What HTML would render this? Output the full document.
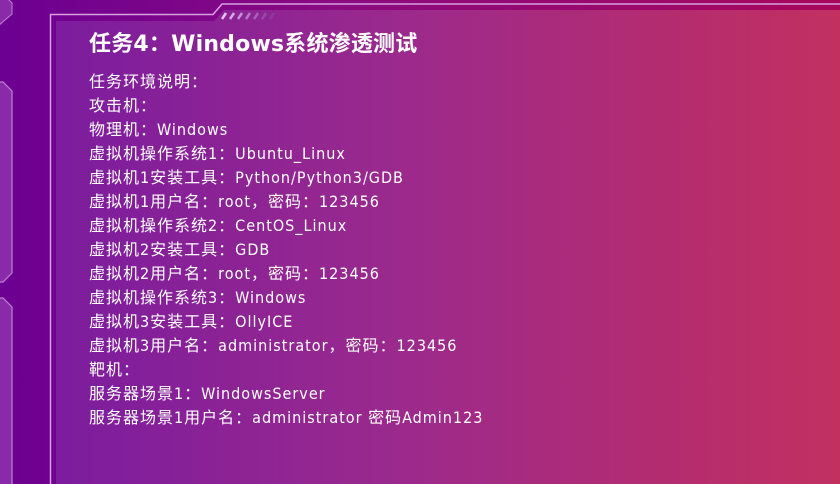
<!DOCTYPE html>
<html><head><meta charset="utf-8"><style>
html,body{margin:0;padding:0}
body{width:840px;height:484px;overflow:hidden;position:relative;background:linear-gradient(90deg,#6c0092 0%,#8a0a80 40%,#a8085a 100%);font-family:"DejaVu Sans","Noto Sans CJK SC",sans-serif;}
.txt{position:absolute;left:89px;top:70px;color:#fff;font-size:16px;line-height:24px;letter-spacing:1px;font-stretch:condensed;font-family:"DejaVu Sans Condensed","DejaVu Sans","Noto Sans CJK SC",sans-serif;}
.title{position:absolute;left:89px;top:29px;color:#fff;font-size:22px;line-height:32px;font-weight:bold;letter-spacing:0.2px}
</style></head><body>
<svg width="840" height="484" style="position:absolute;left:0;top:0">
<defs><linearGradient id="g" x1="0" x2="1" y1="0" y2="0">
<stop offset="0" stop-color="#7c1c9e"/><stop offset="0.45" stop-color="#9c2a8c"/><stop offset="0.75" stop-color="#b22c72"/><stop offset="1" stop-color="#c23060"/></linearGradient></defs>
<path d="M56 484 L56 21 L214 21 L224 10 L840 10 L840 484 Z" fill="url(#g)"/>
<path d="M50.5 484 L50.5 14.5 L213 14.5 L222 4 L840 4" fill="none" stroke="#d8a0e0" stroke-width="1.5"/>
<g stroke-width="2.5" stroke-linecap="butt">
<line x1="222" y1="19" x2="226" y2="13" stroke="#e8c0f0"/>
<line x1="230" y1="19" x2="234" y2="13" stroke="#d8a8e8"/>
<line x1="238" y1="19" x2="242" y2="13" stroke="#c890d8"/>
<line x1="246" y1="19" x2="250" y2="13" stroke="#b878c8"/>
<line x1="254" y1="19" x2="258" y2="13" stroke="#a860b8"/>
<line x1="262" y1="19" x2="266" y2="13" stroke="#9848a8"/>
<line x1="270" y1="19" x2="274" y2="13" stroke="#8c3aa0"/>
</g>
<path d="M-2 -5 L4 -5 L12 3 L12 14 L-2 26" fill="#8a2aa8" stroke="#c080d0" stroke-width="1"/>
<path d="M-2 82 L3 82 L12 91 L12 273 L3 282 L-2 282 Z" fill="#8a2aa8" stroke="#c080d0" stroke-width="1.2"/>
<path d="M-2 298 L3 298 L12 307 L12 490 L-2 490 Z" fill="#8a2aa8" stroke="#c080d0" stroke-width="1.2"/>
</svg>
<div class="title">任务4：Windows系统渗透测试</div>
<div class="txt">任务环境说明：<br>攻击机：<br>物理机：Windows<br>虚拟机操作系统1：Ubuntu_Linux<br>虚拟机1安装工具：Python/Python3/GDB<br>虚拟机1用户名：root，密码：123456<br>虚拟机操作系统2：CentOS_Linux<br>虚拟机2安装工具：GDB<br>虚拟机2用户名：root，密码：123456<br>虚拟机操作系统3：Windows<br>虚拟机3安装工具：OllyICE<br>虚拟机3用户名：administrator，密码：123456<br>靶机：<br>服务器场景1：WindowsServer<br>服务器场景1用户名：administrator 密码Admin123</div>
</body></html>
